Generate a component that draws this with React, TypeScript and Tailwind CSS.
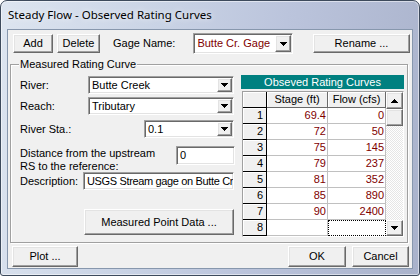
const raised =
  'bg-[#f0f0f0] border border-t-white border-l-white border-r-[#696969] border-b-[#696969] shadow-[inset_-1px_-1px_0_#a0a0a0,inset_1px_1px_0_#e3e3e3]';
const sunken =
  'bg-white border border-t-[#a0a0a0] border-l-[#a0a0a0] border-r-white border-b-white shadow-[inset_1px_1px_0_#696969,inset_-1px_-1px_0_#e3e3e3]';

const readings = [
  ['69.4', '0'],
  ['72', '50'],
  ['75', '145'],
  ['79', '237'],
  ['81', '352'],
  ['85', '890'],
  ['90', '2400'],
];

const Tri = ({ up = false }: { up?: boolean }) => (
  <svg width="7" height="4" viewBox="0 0 7 4" shapeRendering="crispEdges">
    {[0, 1, 2, 3].map((i) => (
      <rect key={i} x={i} y={up ? 3 - i : i} width={7 - 2 * i} height="1" fill="#000" />
    ))}
  </svg>
);

function Combo({ value, className, text = 'text-black' }: { value: string; className: string; text?: string }) {
  return (
    <div className={`${sunken} ${className} flex p-px`}>
      <span className={`flex-1 pl-[2px] self-center whitespace-nowrap overflow-hidden ${text}`}>{value}</span>
      <span className={`${raised} h-full w-[15px] flex items-center justify-center`}>
        <Tri />
      </span>
    </div>
  );
}

function Button({ label, className }: { label: string; className: string }) {
  return <div className={`${raised} ${className} flex items-center justify-center`}>{label}</div>;
}

export default function App() {
  return (
    <div className="w-[420px] h-[276px] bg-white overflow-hidden">
      <div className="w-full h-full rounded-t-[7px] rounded-b-[3px] border border-[#3d4a5c] bg-[linear-gradient(100deg,#dde5f0_0%,#c9d3e5_35%,#bbc4dc_62%,#a9b2cb_100%)] shadow-[inset_0_0_0_1px_rgba(255,255,255,0.5)] flex flex-col">
        <div className="h-[28px] pl-[7px] flex items-center font-['Noto_Sans',sans-serif] text-[11.5px] text-black [text-shadow:0_0_6px_#fff]">
          Steady Flow - Observed Rating Curves
        </div>

        <div className="mx-[6px] mb-[6px] flex-1 border border-[#8797ad] bg-[#f0f0f0] flex flex-col font-['Liberation_Sans',Arial,sans-serif] text-[11px] text-black">
          {/* top row */}
          <div className="mt-[3px] ml-[5px] mr-[2px] h-[21px] flex items-center">
            <Button label="Add" className="w-[40px] h-[19px]" />
            <Button label="Delete" className="ml-[4px] w-[43px] h-[19px]" />
            <span className="ml-[13px]">Gage Name:</span>
            <div className={`${sunken} ml-[18px] w-[100px] h-[21px] flex p-px`}>
              <span className="flex-1 pl-[2px] self-center text-[#800000] whitespace-nowrap">Butte Cr. Gage</span>
              <span className={`${raised} h-full w-[16px] flex items-center justify-center`}>
                <Tri />
              </span>
            </div>
            <Button label="Rename ..." className="ml-auto w-[97px] h-[19px]" />
          </div>

          {/* group box */}
          <div className="mt-[10px] ml-[2px] w-[398px] h-[179px] border border-[#a0a0a0] shadow-[inset_1px_1px_0_#fff,1px_1px_0_#fff] flex flex-col">
            <span className="-mt-[8px] ml-[8px] px-px w-fit bg-[#f0f0f0] leading-[14px]">Measured Rating Curve</span>
            <div className="-mt-[6px] flex">
              {/* left column */}
              <div className="ml-[9px] w-[216px] flex flex-col">
                <div className="mt-[11px] h-[18px] flex items-center">
                  <span className="w-[68px]">River:</span>
                  <Combo value="Butte Creek" className="w-[146px] h-[18px]" />
                </div>
                <div className="mt-[3px] h-[18px] flex items-center">
                  <span className="w-[68px]">Reach:</span>
                  <Combo value="Tributary" className="w-[146px] h-[18px]" />
                </div>
                <div className="mt-[5px] h-[18px] flex items-center">
                  <span className="w-[124px]">River Sta.:</span>
                  <Combo value="0.1" className="w-[90px] h-[18px]" />
                </div>
                <div className="mt-[8px] h-[26px] flex items-start">
                  <span className="w-[156px] pt-px leading-[13px]">
                    Distance from the upstream
                    <br />
                    RS to the reference:
                  </span>
                  <div className={`${sunken} w-[59px] h-[19px] pl-[3px] flex items-center`}>0</div>
                </div>
                <div className="h-[18px] flex items-center">
                  <span className="w-[63px]">Description:</span>
                  <div className={`${sunken} w-[151px] h-[18px] pl-[3px] flex items-center whitespace-nowrap overflow-hidden tracking-[-0.35px]`}>
                    USGS Stream gage on Butte Cr
                  </div>
                </div>
                <Button label="Measured Point Data ..." className="mt-[19px] ml-[64px] w-[150px] h-[26px]" />
              </div>

              {/* right column: table */}
              <div className="ml-[5px] w-[163px] flex flex-col">
                <div className="mt-[10px] h-[14px] bg-[#008080] text-white flex items-center justify-center leading-none">
                  Obseved Rating Curves
                </div>
                <div className="mt-[2px] ml-px w-[162px] h-[146px] border border-t-[#a0a0a0] border-l-[#a0a0a0] border-b-white border-r-white flex overflow-hidden">
                  <div className="grid grid-cols-[24px_61px_58px] auto-rows-[16px] content-start">
                    <div className="bg-[#f0f0f0] border-r border-b border-[#000] shadow-[inset_1px_1px_0_#fff]" />
                    <div className="bg-[#f0f0f0] border-r border-b border-[#696969] shadow-[inset_1px_1px_0_#fff] flex items-center justify-center">
                      Stage (ft)
                    </div>
                    <div className="bg-[#f0f0f0] border-r border-b border-[#696969] shadow-[inset_1px_1px_0_#fff] flex items-center justify-center">
                      Flow (cfs)
                    </div>
                    {readings.map(([stage, flow], i) => (
                      <div key={i} className="contents">
                        <div className="bg-[#f0f0f0] border-r border-b border-[#000] shadow-[inset_1px_1px_0_#fff] flex items-center justify-end pr-[3px]">
                          {i + 1}
                        </div>
                        <div className="bg-white border-r border-b border-[#c0c0c0] flex items-center justify-end pr-px text-[#800000]">
                          {stage}
                        </div>
                        <div className="bg-white border-r border-b border-[#c0c0c0] flex items-center justify-end pr-px text-[#800000]">
                          {flow}
                        </div>
                      </div>
                    ))}
                    <div className="bg-[#f0f0f0] border-r border-b border-[#000] shadow-[inset_1px_1px_0_#fff] flex items-center justify-end pr-[3px]">
                      8
                    </div>
                    <div className="bg-white border-r border-b border-[#c0c0c0]" />
                    <div className="bg-white border border-dotted border-black" />
                  </div>
                  {/* scrollbar */}
                  <div className="w-[17px] flex flex-col">
                    <div className={`${raised} h-[17px] flex items-center justify-center`}>
                      <Tri up />
                    </div>
                    <div className={`${raised} h-[17px]`} />
                    <div className="flex-1 bg-[repeating-conic-gradient(#fff_0%_25%,#e6e6e6_0%_50%)] bg-[length:2px_2px]" />
                    <div className={`${raised} h-[16px] flex items-center justify-center`}>
                      <Tri />
                    </div>
                  </div>
                </div>
              </div>
            </div>
          </div>

          {/* bottom row */}
          <div className="mt-[3px] ml-[4px] mr-[3px] flex items-center">
            <Button label="Plot ..." className="w-[66px] h-[21px]" />
            <Button label="OK" className="ml-auto w-[58px] h-[21px]" />
            <Button label="Cancel" className="ml-[6px] w-[57px] h-[21px]" />
          </div>
        </div>
      </div>
    </div>
  );
}
